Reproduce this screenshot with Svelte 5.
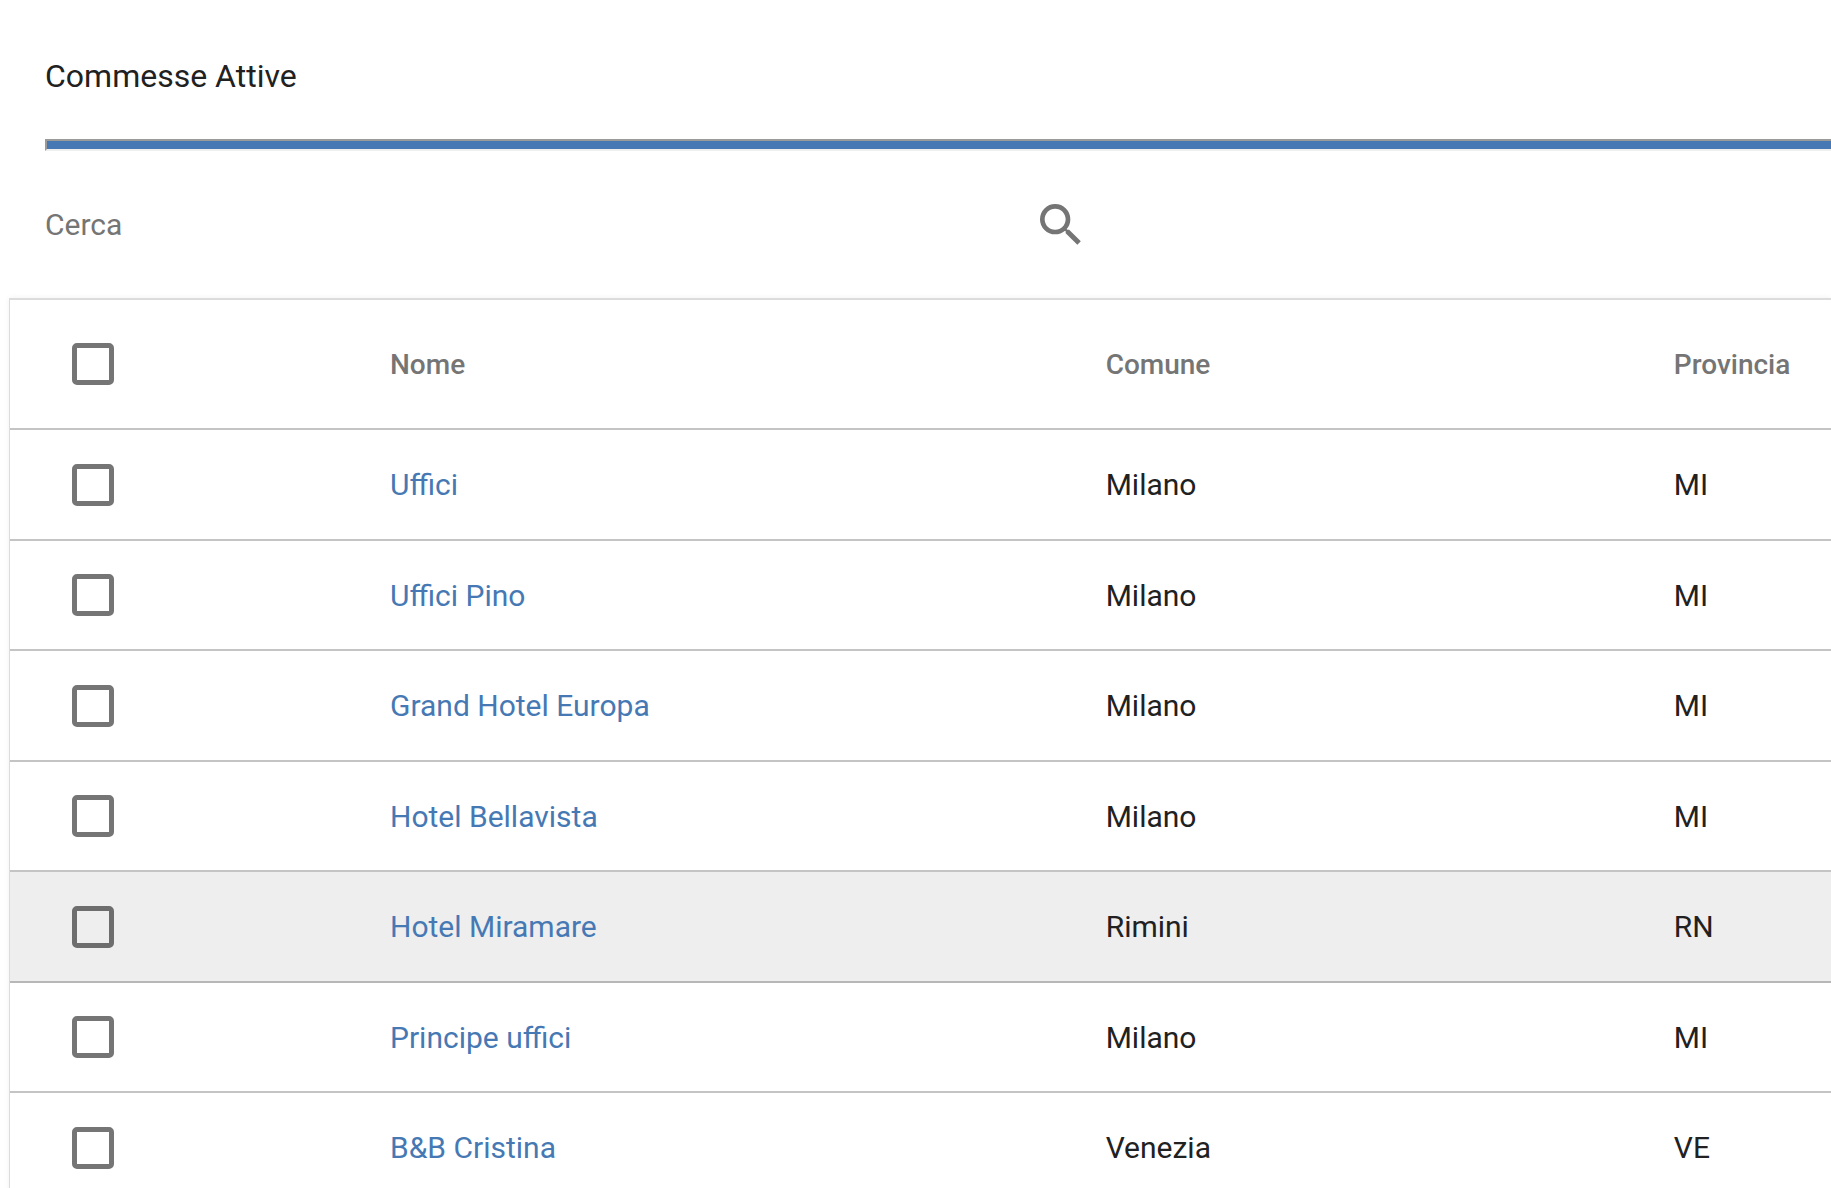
<script>
  let query = $state('');

  const jobs = [
    { name: 'Uffici', town: 'Milano', province: 'MI' },
    { name: 'Uffici Pino', town: 'Milano', province: 'MI' },
    { name: 'Grand Hotel Europa', town: 'Milano', province: 'MI' },
    { name: 'Hotel Bellavista', town: 'Milano', province: 'MI' },
    { name: 'Hotel Miramare', town: 'Rimini', province: 'RN', active: true },
    { name: 'Principe uffici', town: 'Milano', province: 'MI' },
    { name: 'B&B Cristina', town: 'Venezia', province: 'VE' }
  ];

  let selected = $state(jobs.map(() => false));

  const visible = $derived(
    jobs
      .map((job, index) => ({ ...job, index }))
      .filter((job) => job.name.toLowerCase().includes(query.toLowerCase()))
  );

  function toggleAll(event) {
    selected = jobs.map(() => event.currentTarget.checked);
  }
</script>

<main>
  <header>
    <h1>Commesse Attive</h1>
    <hr />
    <form class="search" onsubmit={(event) => event.preventDefault()}>
      <input type="text" placeholder="Cerca" aria-label="Cerca" bind:value={query} />
      <button type="submit" aria-label="Avvia ricerca">
        <svg viewBox="0 0 24 24" aria-hidden="true">
          <path d="M15.5 14h-.79l-.28-.27A6.471 6.471 0 0 0 16 9.5 6.5 6.5 0 1 0 9.5 16c1.61 0 3.09-.59 4.23-1.57l.27.28v.79l5 4.99L20.49 19l-4.99-5zm-6 0C7.01 14 5 11.99 5 9.5S7.01 5 9.5 5 14 7.01 14 9.5 11.99 14 9.5 14z" />
        </svg>
      </button>
    </form>
  </header>

  <div class="panel">
    <table>
      <colgroup>
        <col class="check" />
        <col class="name" />
        <col class="town" />
        <col />
      </colgroup>
      <thead>
        <tr>
          <th>
            <input
              type="checkbox"
              aria-label="Seleziona tutto"
              checked={selected.every(Boolean)}
              onchange={toggleAll}
            />
          </th>
          <th scope="col">Nome</th>
          <th scope="col">Comune</th>
          <th scope="col">Provincia</th>
        </tr>
      </thead>
      <tbody>
        {#each visible as job (job.index)}
          <tr class:active={job.active}>
            <td>
              <input
                type="checkbox"
                aria-label={`Seleziona ${job.name}`}
                bind:checked={selected[job.index]}
              />
            </td>
            <td><a href="#commessa">{job.name}</a></td>
            <td>{job.town}</td>
            <td>{job.province}</td>
          </tr>
        {/each}
      </tbody>
    </table>
  </div>
</main>

<style>
  :global(body) {
    margin: 0;
    background: #fff;
  }

  main {
    height: 100vh;
    overflow: hidden;
    font-family: Roboto, 'Liberation Sans', sans-serif;
    font-size: 30px;
    color: #212121;
  }

  header {
    padding-left: 45px;
  }

  h1 {
    margin: 0;
    padding: 56px 0 43px;
    font-size: 32px;
    line-height: 40px;
    font-weight: 400;
  }

  hr {
    height: 8px;
    margin: 0;
    border: 2px solid #eee;
    border-top-color: #9a9a9a;
    border-left-color: #9a9a9a;
    border-right: 0;
    background: #4679b4;
  }

  .search {
    display: flex;
    align-items: center;
    height: 147px;
  }

  .search input {
    width: 988px;
    padding: 0;
    border: 0;
    outline: 0;
    background: none;
    font: inherit;
    color: inherit;
  }

  .search input::placeholder {
    color: #757575;
    opacity: 1;
  }

  .search button {
    width: 56px;
    height: 56px;
    padding: 0;
    border: 0;
    background: none;
    cursor: pointer;
  }

  .search svg {
    display: block;
    fill: #757575;
  }

  .panel {
    margin-left: 9px;
    border-top: 2px solid #dcdcdc;
    border-left: 1px solid #dcdcdc;
    box-shadow: 0 0 6px rgba(0, 0, 0, 0.06);
  }

  table {
    width: 100%;
    table-layout: fixed;
    border-spacing: 0;
  }

  .check {
    width: 380px;
  }

  .name {
    width: 39.3%;
  }

  .town {
    width: 31.2%;
  }

  th,
  td {
    box-sizing: border-box;
    height: 110px;
    padding: 0;
    border-bottom: 2px solid rgba(0, 0, 0, 0.23);
    text-align: left;
    font-weight: 400;
  }

  /* Rows share 221px in pairs */
  tbody tr:nth-child(odd) td {
    height: 111px;
  }

  th {
    height: 130px;
    font-size: 28px;
    font-weight: 500;
    color: #757575;
  }

  th:first-child,
  td:first-child {
    padding-left: 62px;
  }

  .active {
    background: #eee;
  }

  a {
    color: #4679b4;
    text-decoration: none;
  }

  input[type='checkbox'] {
    appearance: none;
    display: block;
    box-sizing: border-box;
    width: 42px;
    height: 42px;
    margin: 0;
    border: 5px solid rgba(0, 0, 0, 0.54);
    border-radius: 5px;
    cursor: pointer;
  }

  input[type='checkbox']:checked {
    border-color: #4679b4;
    background: #4679b4;
  }
</style>
